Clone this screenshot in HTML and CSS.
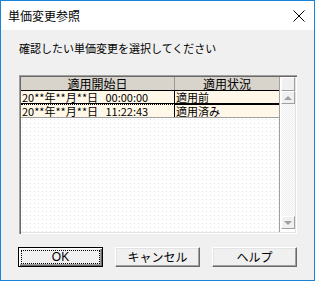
FILE: index.html
```html
<!DOCTYPE html>
<html lang="ja">
<head>
<meta charset="utf-8">
<link rel="stylesheet" href="styles.css">
</head>
<body>
<div class="window">
  <div class="titlebar">
    <span class="title">単価変更参照</span>
    <svg class="close" width="12" height="12" viewBox="0 0 12 12"><path d="M0.5 0.5 L11.5 11.5 M11.5 0.5 L0.5 11.5" stroke="#000" stroke-width="1" fill="none"/></svg>
  </div>
  <div class="content">
    <p class="prompt">確認したい単価変更を選択してください</p>
    <div class="frame">
      <div class="table">
        <div class="row head">
          <div class="cell c1">適用開始日</div>
          <div class="cell c2">適用状況</div>
        </div>
        <div class="row data current">
          <div class="cell c1">20**年**月**日&nbsp;&nbsp;&nbsp;00:00:00</div>
          <div class="cell c2">適用前</div>
        </div>
        <div class="row data second">
          <div class="cell c1">20**年**月**日&nbsp;&nbsp;&nbsp;11:22:43</div>
          <div class="cell c2">適用済み</div>
        </div>
        <div class="empty"></div>
      </div>
      <div class="scroll">
        <div class="corner"></div>
        <div class="sbtn"><span class="tri up"></span></div>
        <div class="track"></div>
        <div class="sbtn"><span class="tri down"></span></div>
      </div>
    </div>
    <div class="buttons">
      <button class="btn default"><span class="focus">OK</span></button>
      <button class="btn">キャンセル</button>
      <button class="btn">ヘルプ</button>
    </div>
  </div>
</div>
</body>
</html>
```
FILE: styles.css
```css
* { box-sizing: border-box; }
html, body { margin: 0; padding: 0; }
body {
  width: 315px;
  height: 281px;
  font-family: "Noto Sans CJK JP", sans-serif;
  font-size: 12px;
  color: #000;
  background: #fff;
}
.window {
  width: 315px;
  height: 281px;
  border: 1px solid #1883d7;
  display: flex;
  flex-direction: column;
  background: #f0f0f0;
}
.titlebar {
  height: 29px;
  flex: none;
  background: #fff;
  display: flex;
  align-items: center;
  justify-content: space-between;
  padding: 0 9px 0 7px;
}
.title {
  font-size: 12px;
  line-height: 14px;
}
.close { display: block; }
.content {
  flex: 1;
  padding: 11px 17px 0 18px;
  display: flex;
  flex-direction: column;
}
.prompt {
  margin: 0 0 20px 0;
  font-size: 11px;
  line-height: 14px;
  white-space: nowrap;
}
.frame {
  height: 159px;
  display: flex;
  padding: 2px;
  background: #fff;
  box-shadow: inset 1px 1px #a0a0a0, inset 2px 2px #696969, inset -1px -1px #fff, inset -2px -2px #e3e3e3;
}
.table {
  width: 258px;
  display: flex;
  flex-direction: column;
}
.row {
  display: flex;
  flex: none;
  font-size: 11px;
}
.cell {
  white-space: nowrap;
  padding-left: 1px;
}
.c1 { width: 154px; }
.c2 { width: 104px; }
.head {
  height: 13px;
  background: #d8d4cc;
  font-size: 12px;
}
.head .cell {
  text-align: center;
  padding: 0;
  line-height: 13px;
}
.head .c1 { border-right: 1px solid #9a9a9a; }
.data {
  background: #fff8e8;
  height: 14px;
  line-height: 12px;
}
.data .c1 { border-right: 1px solid #000; }
.current {
  border-top: 1px solid #000;
  border-bottom: 1px solid #000;
}
.second {
  border-top: 1px dotted #000;
  border-bottom: 1px solid #a0a0a0;
}
.second .c2 { border-top: 1px solid #000; margin-top: -1px; }
.empty {
  flex: 1;
  background-color: #fff;
  background-image: radial-gradient(circle at 0.5px 0.5px, #e4e4e4 0.6px, transparent 0.8px);
  background-size: 4px 4px;
  background-position: 1px 1px;
}
.scroll {
  width: 16px;
  display: flex;
  flex-direction: column;
  padding-left: 1px;
  border-left: 1px solid #a0a0a0;
  background: #fff;
}
.corner {
  height: 14px;
  background: #f0f0f0;
  border: 1px solid;
  border-color: #fff #a0a0a0 #a0a0a0 #fff;
}
.sbtn {
  height: 13px;
  background: #f0f0f0;
  border: 1px solid;
  border-color: #fff #a0a0a0 #a0a0a0 #fff;
  display: flex;
  align-items: center;
  justify-content: center;
}
.tri {
  width: 0;
  height: 0;
  border-left: 4px solid transparent;
  border-right: 4px solid transparent;
}
.tri.up { border-bottom: 4px solid #a0a0a0; }
.tri.down { border-top: 4px solid #a0a0a0; }
.track {
  flex: 1;
  background-color: #fff;
  background-image:
    linear-gradient(45deg, #ececec 25%, transparent 25%, transparent 75%, #ececec 75%),
    linear-gradient(45deg, #ececec 25%, transparent 25%, transparent 75%, #ececec 75%);
  background-size: 2px 2px;
  background-position: 0 0, 1px 1px;
}
.scroll > .sbtn:last-child { margin-bottom: 3px; }
.buttons {
  display: flex;
  gap: 12px;
  margin-top: 13px;
  margin-left: -1px;
}
.btn {
  width: 85px;
  height: 20px;
  padding: 0;
  font-family: "Noto Sans CJK JP", sans-serif;
  font-size: 12px;
  line-height: 14px;
  color: #000;
  background: #f0f0f0;
  border: 1px solid;
  border-color: #fff #696969 #696969 #fff;
  box-shadow: inset -1px -1px #a0a0a0, inset 1px 1px #e3e3e3;
  display: flex;
  align-items: center;
  justify-content: center;
}
.btn.default {
  border: 1px solid #000;
  box-shadow: inset 1px 1px #fff, inset -1px -1px #696969, inset -2px -2px #a0a0a0;
  padding: 2px;
}
.focus {
  flex: 1;
  align-self: stretch;
  border: 1px dotted #000;
  display: flex;
  align-items: center;
  justify-content: center;
  font-family: "Liberation Sans", sans-serif;
}
```
